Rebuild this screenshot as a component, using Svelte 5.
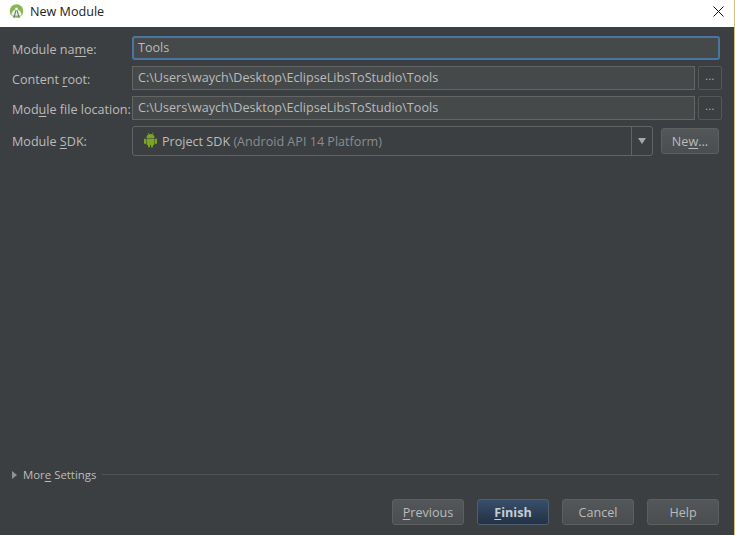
<script>
  const paths = 'C:\\Users\\waych\\Desktop\\EclipseLibsToStudio\\Tools';
</script>

<div class="win">
  <header class="title">
    <svg class="logo" width="15" height="15" viewBox="0 0 15 15">
      <circle cx="7.500" cy="7" r="6.800" fill="#86b84f"/>
      <path d="M2.500 11.500C2.500 8 4.500 5.500 7.500 5.500S12.500 8 12.500 11.500z" fill="#eef4e6"/>
      <path d="M4.800 14 7.500 4.500 10.200 14" fill="none" stroke="#6d7f68" stroke-width="1.100"/>
      <circle cx="7.500" cy="5" r="1.400" fill="#f4f7ef"/>
    </svg>
    <span class="title-text">New Module</span>
    <svg class="close" width="11" height="11" viewBox="0 0 11 11">
      <path d="M.5.500 10.500 10.500M10.500.500.500 10.500" stroke="#111" stroke-width="1" fill="none"/>
    </svg>
  </header>

  <main class="body">
    <div class="form">
      <div class="row r-name">
        <span class="label">Module na<u>m</u>e:</span>
        <div class="field focus">Tools</div>
      </div>
      <div class="row r-path">
        <span class="label">Content <u>r</u>oot:</span>
        <div class="field">{paths}</div>
        <div class="browse">...</div>
      </div>
      <div class="row r-path">
        <span class="label">Mod<u>u</u>le file location:</span>
        <div class="field">{paths}</div>
        <div class="browse">...</div>
      </div>
      <div class="row r-sdk">
        <span class="label"><span>Module <u>S</u>DK:</span></span>
        <div class="combo">
          <div class="combo-value">
            <svg class="droid" width="15" height="16" viewBox="0 0 15 16">
              <g fill="#7ba51f">
                <path d="M3.500 6a4 4 0 0 1 8 0z"/>
                <rect x="3.500" y="6.500" width="8" height="6.500" rx="1"/>
                <rect x="1" y="6.500" width="2" height="5.500" rx="1"/>
                <rect x="12" y="6.500" width="2" height="5.500" rx="1"/>
                <rect x="5" y="12" width="2" height="3.500" rx="1"/>
                <rect x="8" y="12" width="2" height="3.500" rx="1"/>
              </g>
              <path d="M5 .8 6 2.500M10 .8 9 2.500" stroke="#7ba51f" stroke-width=".8"/>
            </svg>
            <span>Project SDK <span class="muted">(Android API 14 Platform)</span></span>
          </div>
          <div class="arrow"><i></i></div>
        </div>
        <div class="btn new">Ne<u>w</u>...</div>
      </div>
    </div>

    <div class="spacer"></div>

    <div class="more">
      <i class="tri"></i>
      <span class="more-text">Mor<u>e</u> Settings</span>
      <span class="rule"></span>
    </div>

    <footer class="actions">
      <div class="btn"><span><u>P</u>revious</span></div>
      <div class="btn primary"><span><u>F</u>inish</span></div>
      <div class="btn">Cancel</div>
      <div class="btn">Help</div>
    </footer>
  </main>
</div>

<style>
  :global(body) {
    margin: 0;
    background: #3c3f41;
  }
  .win {
    width: 734px;
    height: 535px;
    display: flex;
    flex-direction: column;
    border-right: 1px solid #e2c04c;
    font: 12.600px "Open Sans", "Noto Sans", sans-serif;
    color: #bbbbbb;
    overflow: hidden;
  }
  u {
    text-underline-offset: 2px;
    text-decoration-thickness: 1px;
  }
  .title {
    height: 27px;
    flex: none;
    display: flex;
    align-items: center;
    background: #fff;
    padding: 0 10px 4px 9px;
    box-sizing: border-box;
    color: #222;
  }
  .logo {
    margin-right: 6px;
  }
  .title-text {
    flex: 1;
  }
  .body {
    flex: 1;
    display: flex;
    flex-direction: column;
    padding: 9px 15px 10px 12px;
    min-height: 0;
  }
  .form {
    display: flex;
    flex-direction: column;
    gap: 6px;
  }
  .row {
    display: flex;
    align-items: center;
  }
  .r-name { height: 24px; margin-right: -1px; }
  .r-path { height: 24px; margin-right: -3px; }
  .r-sdk { height: 30px; }
  .label {
    width: 120px;
    flex: none;
    white-space: nowrap;
    padding-top: 2px;
  }
  .r-sdk .label { padding-top: 0; }
  .field {
    flex: 1;
    align-self: stretch;
    display: flex;
    align-items: center;
    padding: 0 5px 2px;
    background: #45494a;
    border: 1px solid #646464;
    box-sizing: border-box;
    color: #bbbbbb;
  }
  .field.focus {
    border: 2px solid #4a75a0;
    border-radius: 3px;
    padding: 0 4px 2px;
  }
  .browse {
    width: 24px;
    align-self: stretch;
    flex: none;
    margin-left: 3px;
    box-sizing: border-box;
    border: 1px solid #555759;
    border-radius: 2px;
    background: #3c3f41;
    display: flex;
    align-items: center;
    justify-content: center;
    font-size: 10px;
    line-height: 10px;
    letter-spacing: 0.6px;
    padding-bottom: 4px;
  }
  .combo {
    flex: 1;
    align-self: stretch;
    display: flex;
    box-sizing: border-box;
    border: 1px solid #646464;
    border-radius: 3px;
    background: #3c3f41;
  }
  .combo-value {
    flex: 1;
    display: flex;
    align-items: center;
    gap: 4px;
    padding-left: 10px;
  }
  .droid { margin-top: -2px; }
  .muted { color: #8a8d8f; }
  .arrow {
    width: 20px;
    border-left: 1px solid #646464;
    display: flex;
    align-items: center;
    justify-content: center;
  }
  .arrow i {
    width: 0;
    height: 0;
    border-left: 4px solid transparent;
    border-right: 4px solid transparent;
    border-top: 6px solid #a8a8a8;
  }
  .btn {
    width: 72px;
    height: 26px;
    box-sizing: border-box;
    border: 1px solid #5e6060;
    border-radius: 3px;
    background: linear-gradient(#53575a, #4a4e50);
    display: flex;
    align-items: center;
    justify-content: center;
  }
  .btn.new {
    width: 58px;
    margin-left: 8px;
  }
  .btn.primary {
    background: linear-gradient(#384f6b, #233143);
    border-color: #4e5f72;
    font-weight: 700;
    color: #c4ccd4;
  }
  .spacer { flex: 1; }
  .more {
    display: flex;
    align-items: center;
    height: 20px;
  }
  .tri {
    width: 0;
    height: 0;
    border-top: 4px solid transparent;
    border-bottom: 4px solid transparent;
    border-left: 5px solid #8f9192;
    margin: 1px 6px 0 0;
  }
  .more-text {
    white-space: nowrap;
    font-size: 11.400px;
  }
  .rule {
    flex: 1;
    height: 1px;
    background: #515354;
    margin-left: 6px;
  }
  .actions {
    display: flex;
    justify-content: flex-end;
    gap: 13px;
    margin-top: 15px;
  }
</style>
